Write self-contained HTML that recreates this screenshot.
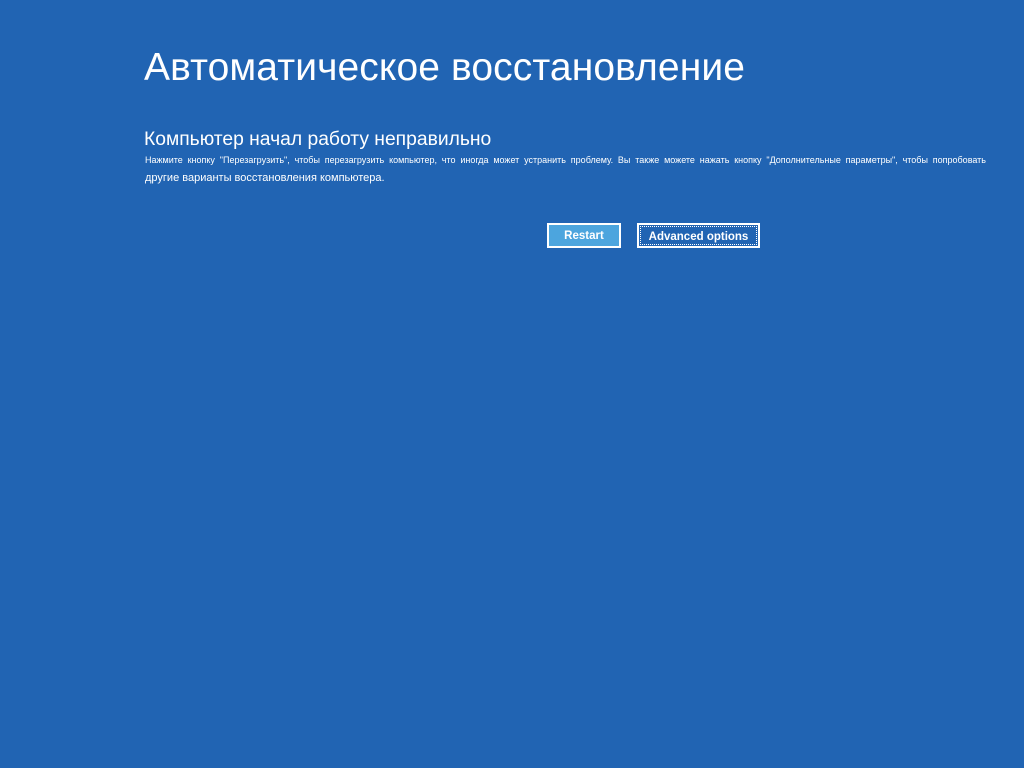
<!DOCTYPE html>
<html><head><meta charset="utf-8"><style>
html,body{margin:0;width:1024px;height:768px;background:#2164b3;overflow:hidden;font-family:"Liberation Sans",sans-serif;color:#fff}
.t{position:absolute;left:144px;top:46px;font-size:39px;white-space:nowrap;letter-spacing:0.1px}
.s{position:absolute;left:144px;top:129px;font-size:19.3px;white-space:nowrap}
.p1{position:absolute;left:145px;top:155px;width:841px;font-size:9px;text-align:justify;text-align-last:justify;white-space:nowrap}
.p2{position:absolute;left:145px;top:172px;font-size:11px;white-space:nowrap}
.b{position:absolute;top:223px;height:21px;border:2px solid #fff;font-weight:bold;font-size:11.5px;text-align:center;line-height:23px}
.r{left:547px;width:70px;background:#4ca5de}
.a{left:637px;width:119px;background:#2164b3}
.a span{position:absolute;left:1px;top:1px;right:1px;bottom:1px;border:1px dotted #fff;line-height:20px}
</style></head><body>
<div class="t">Автоматическое восстановление</div>
<div class="s">Компьютер начал работу неправильно</div>
<div class="p1">Нажмите кнопку "Перезагрузить", чтобы перезагрузить компьютер, что иногда может устранить проблему. Вы также можете нажать кнопку "Дополнительные параметры", чтобы попробовать</div>
<div class="p2">другие варианты восстановления компьютера.</div>
<div class="b r">Restart</div>
<div class="b a"><span>Advanced options</span></div>
</body></html>
